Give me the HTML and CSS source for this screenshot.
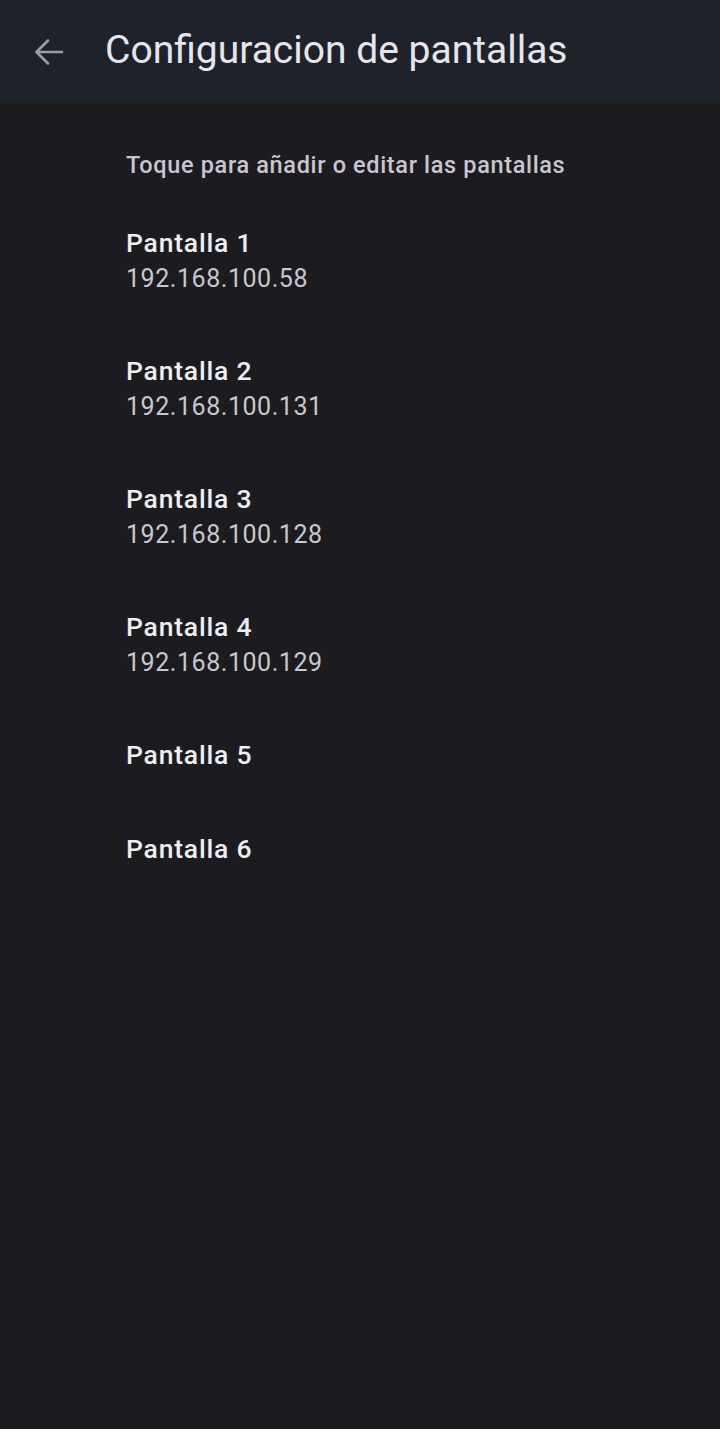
FILE: index.html
```html
<!DOCTYPE html>
<html lang="es">
<head>
<meta charset="utf-8">
<link rel="stylesheet" href="styles.css">
</head>
<body>
<header class="appbar">
  <svg class="back" width="32" height="32" viewBox="0 0 32 32" aria-hidden="true">
    <path d="M29 16H4M15 4.5L3.5 16L15 27.5" fill="none" stroke="#9a9da3" stroke-width="2.6" stroke-linecap="round" stroke-linejoin="round"/>
  </svg>
  <h1 class="title">Configuracion de pantallas</h1>
</header>
<main class="content">
  <p class="hint">Toque para añadir o editar las pantallas</p>
  <ul class="list">
    <li class="item"><div class="name">Pantalla 1</div><div class="ip">192.168.100.58</div></li>
    <li class="item"><div class="name">Pantalla 2</div><div class="ip">192.168.100.131</div></li>
    <li class="item"><div class="name">Pantalla 3</div><div class="ip">192.168.100.128</div></li>
    <li class="item"><div class="name">Pantalla 4</div><div class="ip">192.168.100.129</div></li>
    <li class="item single"><div class="name">Pantalla 5</div></li>
    <li class="item single"><div class="name">Pantalla 6</div></li>
  </ul>
</main>
</body>
</html>
```
FILE: styles.css
```css
* { box-sizing: border-box; }
html, body { margin: 0; padding: 0; }
body {
  background: #1c1b20;
  font-family: Roboto, "Noto Sans", "Liberation Sans", sans-serif;
  min-height: 1429px;
  width: 720px;
}
.appbar {
  height: 103px;
  background: #1e232b;
  display: flex;
  align-items: center;
  padding-left: 33px;
}
.back { flex: none; }
.title {
  margin: 0 0 0 40px;
  font-weight: 400;
  font-size: 39px;
  color: #e6e6ea;
  letter-spacing: 0;
  line-height: 48px;
  position: relative;
  top: -2px;
}
.content {
  padding-left: 126px;
}
.hint {
  margin: 0;
  padding-top: 46px;
  font-size: 23.5px;
  font-weight: 500;
  color: #cbc5d2;
  line-height: 32px;
  letter-spacing: 0.65px;
}
.list {
  list-style: none;
  margin: 0;
  padding: 0;
  padding-top: 44px;
}
.item {
  height: 128px;
}
.item.single { height: 94px; }
.name {
  font-size: 26.5px;
  font-weight: 500;
  color: #eeedf2;
  line-height: 36px;
  letter-spacing: 0.8px;
}
.ip {
  font-size: 25px;
  font-weight: 400;
  color: #c9c7cd;
  line-height: 36px;
  letter-spacing: 0.55px;
}
```
